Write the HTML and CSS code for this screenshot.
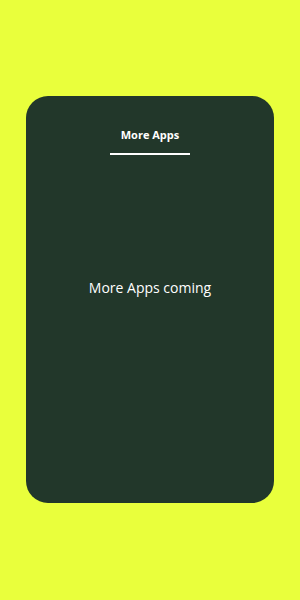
FILE: index.html
```html
<!DOCTYPE html>
<html>
<head>
<meta charset="utf-8">
<link rel="stylesheet" href="styles.css">
</head>
<body>
<div class="page">
  <div class="card">
    <div class="header">
      <div class="title">More Apps</div>
      <div class="underline"></div>
    </div>
    <div class="message">More Apps coming</div>
  </div>
</div>
</body>
</html>
```
FILE: styles.css
```css
html, body {
  margin: 0;
  padding: 0;
}
body {
  background: #e9ff3c;
  font-family: "Open Sans", "DejaVu Sans", sans-serif;
}
.page {
  width: 300px;
  height: 600px;
  padding: 96px 26px 0 26px;
  box-sizing: border-box;
}
.card {
  width: 248px;
  height: 407px;
  background: #22372a;
  border-radius: 22px;
  display: flex;
  flex-direction: column;
  align-items: center;
}
.header {
  padding-top: 32px;
  display: flex;
  flex-direction: column;
  align-items: center;
}
.title {
  color: #ffffff;
  font-size: 11px;
  line-height: 14px;
  font-weight: 700;
}
.underline {
  margin-top: 11px;
  width: 80px;
  height: 2px;
  background: #ffffff;
}
.message {
  margin-top: 123px;
  color: #ffffff;
  font-size: 14px;
  line-height: 20px;
  font-weight: 400;
}
```
